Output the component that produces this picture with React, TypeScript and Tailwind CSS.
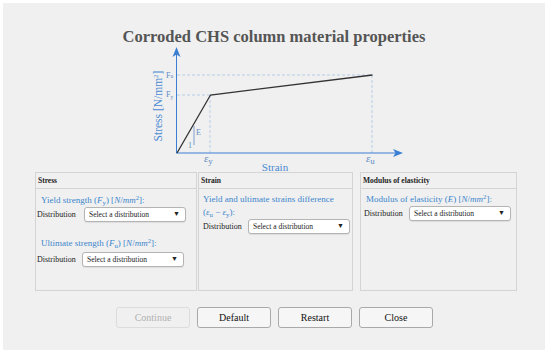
import React from "react";

const serif = "font-['Liberation_Serif',serif]";
const svgFont = { fontFamily: "'Liberation Serif', serif" };

function Select({ className = "" }: { className?: string }) {
  return (
    <div
      className={`flex h-[15px] w-[102px] items-center justify-between rounded-[3px] border border-[#b4b4b4] bg-white pl-[4px] pr-[5px] text-[7.5px] text-[#222] shadow-[0_1px_1px_rgba(0,0,0,0.08)] ${className}`}
    >
      <span>Select a distribution</span>
      <span className="text-[7px]">▼</span>
    </div>
  );
}

function Row({ labelW = 47, className = "" }: { labelW?: number; className?: string }) {
  return (
    <div className={`flex items-center ${className}`}>
      <span className="text-[8px] text-[#222]" style={{ width: labelW }}>
        Distribution
      </span>
      <Select />
    </div>
  );
}

function Panel({
  title,
  width,
  className = "",
  children,
}: {
  title: string;
  width: string;
  className?: string;
  children: React.ReactNode;
}) {
  return (
    <div className={`flex flex-col border border-[#d4d4d4] ${width} ${className}`}>
      <div className="h-[16px] border-b border-[#d4d4d4] px-[2px] text-[7.5px] font-bold leading-[16px] text-[#222]">
        {title}
      </div>
      <div className="flex flex-col">{children}</div>
    </div>
  );
}

function Chart() {
  const blue = "#3b7fd4";
  const dash = "#b7cde8";
  const lbl = "#5e8cc4";
  return (
    <svg
      width={270}
      height={125}
      viewBox="140 47 270 125"
      overflow="visible"
      className="relative z-10 ml-[137px] block"
      style={svgFont}
    >
      {/* dashed guides */}
      <g stroke={dash} strokeWidth={1} strokeDasharray="3 2" fill="none">
        <line x1={177} y1={75} x2={372} y2={75} />
        <line x1={372} y1={75} x2={372} y2={153} />
        <line x1={177} y1={95} x2={210} y2={95} />
        <line x1={210} y1={95} x2={210} y2={153} />
      </g>
      {/* axes */}
      <line x1={176.5} y1={153} x2={176.5} y2={53} stroke={blue} strokeWidth={1} />
      <polygon points="176.5,47 172.5,57 176.5,54.5 180.5,57" fill={blue} />
      <line x1={176} y1={153} x2={397} y2={153} stroke={blue} strokeWidth={1} />
      <polygon points="403,153 393,149 395.5,153 393,157" fill={blue} />
      {/* curve */}
      <polyline
        points="177,153 210.5,95 372.5,75"
        fill="none"
        stroke="#333"
        strokeWidth={1.3}
      />
      {/* slope marker */}
      <line x1={194} y1={126} x2={194} y2={145} stroke={lbl} strokeWidth={0.8} />
      <text x={196} y={135} fontSize={8} fill={lbl} style={svgFont}>
        E
      </text>
      <text x={188} y={147.5} fontSize={8} fill={lbl} style={svgFont}>
        1
      </text>
      {/* labels */}
      <text x={166} y={78} fontSize={8} fill={lbl} style={svgFont}>
        F<tspan fontSize={5.5}>u</tspan>
      </text>
      <text x={166} y={97} fontSize={8} fill={lbl} style={svgFont}>
        F<tspan fontSize={5.5} dy={1.5}>y</tspan>
      </text>
      <text x={204} y={162} fontSize={11} fill={lbl} style={svgFont}>
        <tspan fontStyle="italic">ε</tspan>
        <tspan fontSize={9} dy={1.5}>y</tspan>
      </text>
      <text x={366} y={162} fontSize={11} fill={lbl} style={svgFont}>
        <tspan fontStyle="italic">ε</tspan>
        <tspan fontSize={9} dy={1.5}>u</tspan>
      </text>
      <text x={275} y={170.5} fontSize={11} fill="#4a8ad2" textAnchor="middle" style={svgFont}>
        Strain
      </text>
      <text
        transform="translate(162,106) rotate(-90)"
        fontSize={11.5}
        fill="#4a8ad2"
        textAnchor="middle"
        style={svgFont}
      >
        Stress [N/mm<tspan fontSize={7} dy={-4.5}>2</tspan>
        <tspan dy={4.5}>]</tspan>
      </text>
    </svg>
  );
}

function Btn({ label, disabled = false }: { label: string; disabled?: boolean }) {
  return (
    <button
      className={
        disabled
          ? "h-[21px] w-[74px] rounded-[3px] border border-[#dcdcdc] bg-[#f0f0f0] text-[10px] text-[#b0b0b0]"
          : "h-[21px] w-[74px] rounded-[3px] border border-[#a9a9a9] bg-[#f6f6f6] text-[10px] text-[#111]"
      }
    >
      {label}
    </button>
  );
}

export default function App() {
  const blueTxt = "text-[9px] text-[#3d86cc]";
  return (
    <div className={`h-[357px] w-[550px] bg-white pl-[3px] pt-[3px] ${serif}`}>
      <div className="flex h-[347px] w-[542px] flex-col bg-[#f0f0f0]">
        {/* Title */}
        <div className="h-[44px] pt-[24px] text-center">
          <h1 className="text-[16.5px] font-bold leading-[20px] text-[#555]">
            Corroded CHS column material properties
          </h1>
        </div>

        {/* Diagram */}
        <Chart />

        {/* Panels */}
        <div className="ml-[32px] flex h-[119px]">
          <Panel title="Stress" width="w-[162px]">
            <div className={`mt-[4px] h-[14px] pl-[5px] leading-[14px] ${blueTxt}`}>
              Yield strength (<i>F</i>
              <sub>y</sub>) [<i>N</i>/<i>mm</i>
              <sup>2</sup>]:
            </div>
            <Row className="ml-[1px]" />
            <div className={`mt-[14px] h-[14px] pl-[5px] leading-[14px] ${blueTxt}`}>
              Ultimate strength (<i>F</i>
              <sub>u</sub>) [<i>N</i>/<i>mm</i>
              <sup>2</sup>]:
            </div>
            <Row className="ml-[1px] mt-[2px]" labelW={45} />
          </Panel>

          <Panel title="Strain" width="w-[155px]" className="ml-[1px]">
            <div className={`mt-[4px] pl-[4px] leading-[13px] ${blueTxt}`}>
              Yield and ultimate strains difference
              <br />(<i>ε</i>
              <sub>u</sub> − <i>ε</i>
              <sub>y</sub>):
            </div>
            <Row className="ml-[4px]" labelW={45} />
          </Panel>

          <Panel title="Modulus of elasticity" width="w-[157px]" className="ml-[7px]">
            <div className={`mt-[4px] h-[13px] pl-[5px] leading-[13px] ${blueTxt}`}>
              Modulus of elasticity (<i>E</i>) [<i>N</i>/<i>mm</i>
              <sup>2</sup>]:
            </div>
            <Row className="ml-[3px]" labelW={45} />
          </Panel>
        </div>

        {/* Buttons */}
        <div className="ml-[113px] mt-[16px] flex gap-[7px]">
          <Btn label="Continue" disabled />
          <Btn label="Default" />
          <Btn label="Restart" />
          <Btn label="Close" />
        </div>
      </div>
    </div>
  );
}
